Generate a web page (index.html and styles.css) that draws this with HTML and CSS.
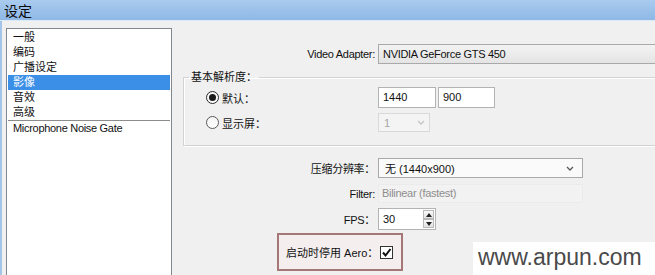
FILE: index.html
```html
<!DOCTYPE html>
<html lang="zh-CN">
<head>
    <meta charset="UTF-8">
    <meta name="viewport" content="width=device-width, initial-scale=1.0">
    <title>设定</title>
    <link rel="stylesheet" href="styles.css">
</head>
<body>
    <div class="window">
        <div class="titlebar">设定</div>
        <div class="client">
            <ul class="nav-list">
                <li>一般</li>
                <li>编码</li>
                <li>广播设定</li>
                <li class="selected">影像</li>
                <li>音效</li>
                <li>高级</li>
                <li class="sep">Microphone Noise Gate</li>
            </ul>

            <div class="pane">
                <div class="row adapter-row">
                    <span class="label">Video Adapter:</span>
                    <div class="combo-disabled">NVIDIA GeForce GTS 450</div>
                </div>

                <fieldset class="res-group">
                    <legend>基本解析度：</legend>
                    <div class="res-row">
                        <div class="res-choice"><span class="radio checked"></span>默认：</div>
                        <div class="textbox w-width">1440</div>
                        <div class="textbox w-height">900</div>
                    </div>
                    <div class="res-row res-row-2">
                        <div class="res-choice"><span class="radio"></span>显示屏：</div>
                        <div class="select-disabled">
                            <span>1</span>
                            <svg width="8" height="5" viewBox="0 0 8 5"><path d="M1 1 L4 4 L7 1" fill="none" stroke="#c4c4c4" stroke-width="1.3"/></svg>
                        </div>
                    </div>
                </fieldset>

                <div class="row scale-row">
                    <span class="label">压缩分辨率：</span>
                    <div class="select">
                        <span>无 (1440x900)</span>
                        <svg width="8" height="5" viewBox="0 0 8 5"><path d="M1 1 L4 4 L7 1" fill="none" stroke="#5a5a5a" stroke-width="1.3"/></svg>
                    </div>
                </div>

                <div class="row filter-row">
                    <span class="label">Filter:</span>
                    <div class="field-disabled">Bilinear (fastest)</div>
                </div>

                <div class="row fps-row">
                    <span class="label">FPS：</span>
                    <div class="spin">
                        <span class="spin-value">30</span>
                        <div class="spin-buttons">
                            <div class="spin-btn"><svg width="6" height="4" viewBox="0 0 6 4"><path d="M0 4 L3 0 L6 4 Z" fill="#222"/></svg></div>
                            <div class="spin-btn"><svg width="6" height="4" viewBox="0 0 6 4"><path d="M0 0 L3 4 L6 0 Z" fill="#222"/></svg></div>
                        </div>
                    </div>
                </div>

                <div class="aero-box">
                    <span>启动时停用 Aero：</span>
                    <span class="checkbox">
                        <svg width="11" height="11" viewBox="0 0 11 11"><path d="M2 5.5 L4.5 8.5 L9.5 2" fill="none" stroke="#111" stroke-width="2"/></svg>
                    </span>
                </div>
            </div>
        </div>

        <div class="watermark">www.arpun.com</div>
    </div>
</body>
</html>
```

FILE: styles.css
```css
* {
    margin: 0;
    padding: 0;
    box-sizing: border-box;
}

body {
    width: 655px;
    height: 275px;
    overflow: hidden;
    background-color: #f0f0f0;
    font-family: "Liberation Sans", "Noto Sans CJK SC", sans-serif;
    font-size: 11px;
    color: #111111;
}

.window {
    position: relative;
    height: 275px;
    overflow: hidden;
}

.titlebar {
    height: 21px;
    padding-left: 4px;
    background: linear-gradient(#a9cbee, #8eb8e6);
    border-bottom: 1px solid #dce9f7;
    font-family: "Noto Sans CJK SC", sans-serif;
    font-size: 14px;
    line-height: 20px;
    color: #0a0a0a;
}

.client {
    display: flex;
    height: 254px;
    padding: 7px 0 0 4px;
    border-left: 2px solid #a3c5ea;
    overflow: hidden;
}

/* left list */
.nav-list {
    list-style: none;
    flex-shrink: 0;
    width: 166px;
    height: 260px;
    padding: 1px 1px 0 1px;
    background-color: #ffffff;
    border: 1px solid #828790;
}

.nav-list li {
    height: 15px;
    line-height: 15px;
    padding-left: 5px;
    white-space: nowrap;
}

.nav-list li.selected {
    background-color: #3b8fe6;
    color: #ffffff;
}

.nav-list li.sep {
    height: 16px;
    border-top: 1px solid #8c8c8c;
    letter-spacing: -0.3px;
}

/* right side */
.pane {
    flex: 1;
    min-width: 0;
    padding-top: 16px;
    overflow: hidden;
}

.row {
    display: flex;
    align-items: center;
}

.label {
    flex-shrink: 0;
    width: 203px;
    margin-right: 3px;
    text-align: right;
    white-space: nowrap;
    letter-spacing: -0.3px;
}

.combo-disabled {
    flex-shrink: 0;
    width: 320px;
    height: 20px;
    padding-left: 4px;
    line-height: 18px;
    background: linear-gradient(#f3f3f3, #e4e4e4);
    border: 1px solid #a9a9a9;
    border-right: none;
    letter-spacing: -0.3px;
    white-space: nowrap;
}

.res-group {
    width: 520px;
    margin: 6px 0 0 11px;
    padding: 2px 0 13px 0;
    border: 1px solid #d3d3d3;
    box-shadow: inset 1px 1px 0 #ffffff, 1px 1px 0 #ffffff;
}

.res-group legend {
    margin-left: 5px;
    padding: 0 2px;
    line-height: 15px;
}

.res-row {
    display: flex;
    align-items: center;
    height: 21px;
}

.res-row-2 {
    height: 19px;
    margin-top: 5px;
}

.res-choice {
    flex-shrink: 0;
    display: flex;
    align-items: center;
    width: 194px;
    padding-left: 22px;
}

.radio {
    display: flex;
    align-items: center;
    justify-content: center;
    width: 13px;
    height: 13px;
    margin-right: 3px;
    border: 1px solid #5a5a5a;
    border-radius: 50%;
    background: linear-gradient(#f4f4f4, #ffffff);
}

.radio.checked {
    border-color: #2a2a2a;
}

.radio.checked::after {
    content: "";
    width: 7px;
    height: 7px;
    border-radius: 50%;
    background-color: #1a1a1a;
}

.textbox {
    height: 21px;
    padding-left: 4px;
    line-height: 19px;
    background-color: #ffffff;
    border: 1px solid #b3b3b3;
}

.w-width {
    width: 58px;
}

.w-height {
    width: 57px;
    margin-left: 2px;
}

.select-disabled {
    display: flex;
    align-items: center;
    justify-content: space-between;
    width: 52px;
    height: 19px;
    padding: 0 4px 0 5px;
    background-color: #f4f4f4;
    border: 1px solid #d9d9d9;
    color: #a6a6a6;
}

.scale-row {
    margin-top: 12px;
}

.select {
    display: flex;
    align-items: center;
    justify-content: space-between;
    width: 205px;
    height: 20px;
    padding: 0 8px 0 6px;
    background-color: #fafafa;
    border: 1px solid #a9a9a9;
}

.filter-row {
    margin-top: 6px;
}

.field-disabled {
    width: 205px;
    height: 19px;
    padding-left: 3px;
    line-height: 17px;
    background-color: #f2f2f2;
    border: 1px solid #ebebeb;
    color: #8e8e8e;
    letter-spacing: -0.3px;
}

.fps-row {
    margin-top: 5px;
}

.spin {
    display: flex;
    justify-content: space-between;
    width: 58px;
    height: 22px;
    padding: 1px 1px 1px 4px;
    background-color: #ffffff;
    border: 1px solid #b3b3b3;
}

.spin-value {
    line-height: 18px;
}

.spin-buttons {
    display: flex;
    flex-direction: column;
}

.spin-btn {
    display: flex;
    align-items: center;
    justify-content: center;
    width: 11px;
    height: 9px;
    background: linear-gradient(#fafafa, #e2e2e2);
    border: 1px solid #b8b8b8;
}

.aero-box {
    display: flex;
    align-items: center;
    justify-content: space-between;
    width: 126px;
    height: 38px;
    margin: 3px 0 0 105px;
    padding: 0 8px 0 7px;
    background-color: #f4eeee;
    border: 2px solid #a57777;
    white-space: nowrap;
}

.checkbox {
    display: flex;
    align-items: center;
    justify-content: center;
    width: 13px;
    height: 13px;
    background-color: #ffffff;
    border: 1px solid #333333;
}

.watermark {
    position: absolute;
    left: 473px;
    top: 242px;
    right: 0;
    bottom: 0;
    padding-left: 5px;
    background-color: #ffffff;
    font-family: "Liberation Sans", sans-serif;
    font-size: 23px;
    line-height: 30px;
    color: #4a4a4a;
}
```
